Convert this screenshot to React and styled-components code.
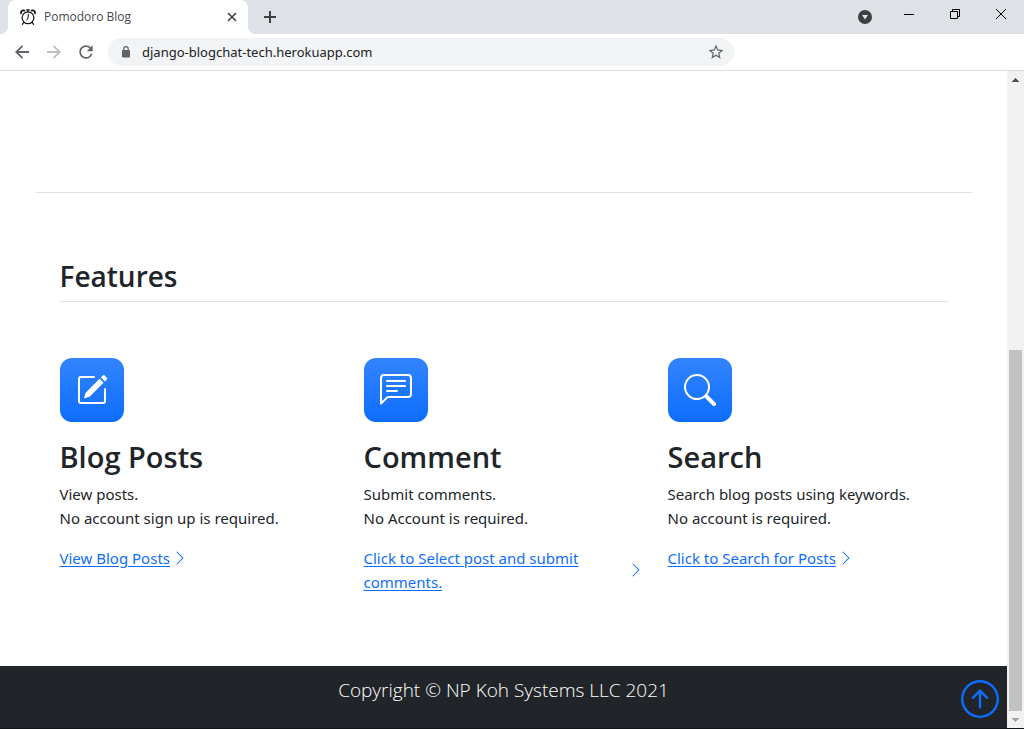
import React from "react";
import styled, { createGlobalStyle } from "styled-components";
import { BsPencilSquare, BsChatLeftText, BsSearch, BsChevronRight, BsArrowUpCircle } from "react-icons/bs";
import { MdRefresh, MdStarBorder } from "react-icons/md";

const GlobalStyle = createGlobalStyle`
  * { box-sizing: border-box; }
  body {
    margin: 0;
    background: #fff;
    color: #212529;
    font-family: "Noto Sans", "Open Sans", sans-serif;
    font-size: 15px;
    line-height: 24px;
  }
  button { padding: 0; border: 0; background: none; color: inherit; font: inherit; cursor: pointer; }
  svg { display: block; flex: none; }
`;

const Window = styled.div`
  display: flex;
  flex-direction: column;
  min-height: 100vh;
  border-bottom: 1px solid #121417;
`;

const TabStrip = styled.header`
  display: flex;
  height: 34px;
  padding-left: 8px;
  background: #dee1e6;
`;

const Tab = styled.div`
  position: relative;
  display: flex;
  align-items: center;
  gap: 8px;
  width: 240px;
  padding: 0 8px 0 12px;
  border-radius: 8px 8px 0 0;
  background: #fff;
  color: #45494d;
  font-family: "Open Sans", "Noto Sans", sans-serif;
  font-size: 12px;

  &::before,
  &::after {
    content: "";
    position: absolute;
    bottom: 0;
    width: 8px;
    height: 8px;
  }
  &::before {
    left: -8px;
    background: radial-gradient(circle at 0 0, #dee1e6 8px, #fff 8px);
  }
  &::after {
    right: -8px;
    background: radial-gradient(circle at 100% 0, #dee1e6 8px, #fff 8px);
  }
`;

const TabTitle = styled.span`
  flex: 1;
  white-space: nowrap;
`;

const IconButton = styled.button`
  display: flex;
  align-items: center;
  justify-content: center;
  width: ${(p) => p.$width || 32}px;
  height: ${(p) => p.$height || 34}px;
  color: ${(p) => p.$color || "#5f6368"};
`;

const WindowControls = styled.div`
  display: flex;
  margin-left: auto;
`;

const Toolbar = styled.nav`
  display: flex;
  align-items: center;
  height: 37px;
  padding-left: 6px;
  border-bottom: 1px solid #dadce0;
  background: #fff;
`;

const AddressBar = styled.label`
  display: flex;
  flex: 1;
  align-items: center;
  gap: 12px;
  height: 28px;
  margin-left: 6px;
  margin-right: 290px;
  padding: 0 2px 0 14px;
  border-radius: 14px;
  background: #f1f3f4;
  color: #5f6368;
`;

const AddressInput = styled.input`
  flex: 1;
  min-width: 0;
  padding: 0;
  border: 0;
  outline: 0;
  background: none;
  color: #202124;
  font: 13px "Noto Sans", "Open Sans", sans-serif;
`;

const Viewport = styled.div`
  display: flex;
  flex: 1;
`;

const Page = styled.div`
  display: flex;
  flex: 1;
  flex-direction: column;
`;

const Main = styled.main`
  flex: 1;
  width: 100%;
  max-width: 936px;
  margin: 0 auto;
  padding-top: 121px;
`;

const Section = styled.section`
  padding: 64px 24px 71px;
  border-top: 1px solid #dee2e6;
`;

const SectionTitle = styled.h2`
  margin: 0 0 56px;
  padding-bottom: 6px;
  border-bottom: 1px solid #dee2e6;
  font-family: "Open Sans", "Noto Sans", sans-serif;
  font-size: 28px;
  font-weight: 600;
  line-height: 38px;
`;

const FeatureGrid = styled.div`
  display: grid;
  grid-template-columns: repeat(3, 1fr);
  gap: 24px;
`;

const FeatureIcon = styled.div`
  display: flex;
  align-items: center;
  justify-content: center;
  width: 64px;
  height: 64px;
  margin-bottom: 16px;
  border-radius: 12px;
  background: linear-gradient(180deg, #3284fd, #0d6efd);
  color: #fff;
`;

const FeatureTitle = styled.h3`
  margin: 0 0 6px;
  font-family: "Open Sans", "Noto Sans", sans-serif;
  font-size: 29px;
  font-weight: 600;
  line-height: 38px;
`;

const FeatureText = styled.p`
  margin: 0 0 16px;
`;

const FeatureLink = styled.a`
  display: inline-flex;
  align-items: center;
  gap: 2px;
  color: #0d6efd;
  text-decoration: underline;
  text-underline-offset: 2px;
`;

const Footer = styled.footer`
  position: relative;
  height: 62px;
  padding-top: 12px;
  background: #212529;
  color: #fff;
  font-family: "Open Sans", "Noto Sans", sans-serif;
  font-size: 19px;
  font-weight: 300;
  text-align: center;
`;

const BackToTop = styled.a`
  position: absolute;
  right: 8px;
  top: 14px;
  color: #0d6efd;
`;

const ScrollTrack = styled.div`
  display: flex;
  flex-direction: column;
  width: 17px;
  background: #f1f1f1;
`;

const ScrollThumb = styled.div`
  flex: 1;
  margin: 262px 2px 0;
  background: #c1c1c1;
`;

function AlarmClock() {
  return (
    <svg width="16" height="16" viewBox="0 0 16 16" fill="none" stroke="#111" strokeLinecap="round">
      <circle cx="8" cy="8.8" r="5.9" strokeWidth="1.2" />
      <path d="M8.3 5.2 8 9l-1.2 2" strokeWidth="1" />
      <path d="M1 4.4C.5 2.5 2.2.9 4.4 1.6M15 4.4c.5-1.9-1.2-3.5-3.4-2.8" strokeWidth="1.7" />
      <path d="M6.7.8h2.6M8 .8v2M3.7 13.5l-1.3 1.8M12.3 13.5l1.3 1.8" strokeWidth="1.2" />
    </svg>
  );
}

function StrokeIcon({ size, path, weight = 2 }) {
  return (
    <svg
      width={size}
      height={size}
      viewBox={`0 0 ${size} ${size}`}
      fill="none"
      stroke="currentColor"
      strokeWidth={weight}
    >
      <path d={path} />
    </svg>
  );
}

function Padlock() {
  return (
    <svg width="8" height="12" viewBox="0 0 8 12" fill="none">
      <rect y="4" width="8" height="7.5" rx="1" fill="#5f6368" />
      <path d="M1.8 5V2.8a2.2 2.2 0 0 1 4.4 0V5" stroke="#5f6368" strokeWidth="1.2" />
    </svg>
  );
}

function ScrollArrow({ down }) {
  return (
    <IconButton type="button" $width={17} $height={17} aria-label={down ? "Scroll down" : "Scroll up"}>
      <svg width="7" height="4" viewBox="0 0 7 4" shapeRendering="crispEdges">
        <path d={down ? "M0 0h7L3.5 4z" : "M0 4h7L3.5 0z"} fill={down ? "#a3a3a3" : "#505050"} />
      </svg>
    </IconButton>
  );
}

const features = [
  {
    icon: BsPencilSquare,
    title: "Blog Posts",
    lines: ["View posts.", "No account sign up is required."],
    link: "View Blog Posts",
  },
  {
    icon: BsChatLeftText,
    title: "Comment",
    lines: ["Submit comments.", "No Account is required."],
    link: "Click to Select post and submit comments.",
  },
  {
    icon: BsSearch,
    title: "Search",
    lines: ["Search blog posts using keywords.", "No account is required."],
    link: "Click to Search for Posts",
  },
];

function Feature({ icon: Icon, title, lines, link }) {
  return (
    <article>
      <FeatureIcon>
        <Icon size={32} />
      </FeatureIcon>
      <FeatureTitle>{title}</FeatureTitle>
      <FeatureText>
        {lines[0]}
        <br />
        {lines[1]}
      </FeatureText>
      <FeatureLink href="#">
        <span>{link}</span>
        <BsChevronRight size={16} />
      </FeatureLink>
    </article>
  );
}

export default function App() {
  return (
    <>
      <GlobalStyle />
      <Window>
        <TabStrip>
          <Tab>
            <AlarmClock />
            <TabTitle>Pomodoro Blog</TabTitle>
            <IconButton type="button" $width={16} $color="#3c4043" aria-label="Close tab">
              <StrokeIcon size={10} path="M1 1l8 8M9 1L1 9" weight={1.6} />
            </IconButton>
          </Tab>
          <IconButton type="button" $width={44} $color="#3c4043" aria-label="New tab">
            <StrokeIcon size={12} path="M6 0v12M0 6h12" />
          </IconButton>
          <WindowControls>
            <IconButton type="button" $width={42} aria-label="Search tabs">
              <svg width="14" height="14" viewBox="0 0 14 14">
                <circle cx="7" cy="7" r="7" fill="#3c4043" />
                <path d="M4 5h6L7 9.5z" fill="#dee1e6" />
              </svg>
            </IconButton>
            <IconButton type="button" $width={46} $height={28} aria-label="Minimize">
              <svg width="10" height="10" viewBox="0 0 10 10" stroke="#000">
                <path d="M0 5.5h10" />
              </svg>
            </IconButton>
            <IconButton type="button" $width={46} $height={28} aria-label="Restore">
              <svg width="10" height="10" viewBox="0 0 10 10" fill="none" stroke="#000">
                <path d="M.5 2.5h7v7h-7zM2.5 2.5v-2h7v7h-2" />
              </svg>
            </IconButton>
            <IconButton type="button" $width={46} $height={28} aria-label="Close window">
              <svg width="10" height="10" viewBox="0 0 10 10" fill="none" stroke="#000">
                <path d="M0 0l10 10M10 0L0 10" />
              </svg>
            </IconButton>
          </WindowControls>
        </TabStrip>
        <Toolbar>
          <IconButton type="button" aria-label="Back">
            <StrokeIcon size={14} path="M14 7H1.5M7.5 .8L1.3 7l6.2 6.2" weight={1.8} />
          </IconButton>
          <IconButton type="button" $color="#bbbdc0" aria-label="Forward">
            <StrokeIcon size={14} path="M0 7h12.5M6.5 .8L12.7 7l-6.2 6.2" weight={1.8} />
          </IconButton>
          <IconButton type="button" aria-label="Reload">
            <MdRefresh size={20} />
          </IconButton>
          <AddressBar>
            <Padlock />
            <AddressInput type="text" aria-label="Address" defaultValue="django-blogchat-tech.herokuapp.com" />
            <IconButton type="button" $height={28} aria-label="Bookmark this page">
              <MdStarBorder size={18} />
            </IconButton>
          </AddressBar>
        </Toolbar>
        <Viewport>
          <Page>
            <Main>
              <Section>
                <SectionTitle>Features</SectionTitle>
                <FeatureGrid>
                  {features.map((f) => (
                    <Feature key={f.title} {...f} />
                  ))}
                </FeatureGrid>
              </Section>
            </Main>
            <Footer>
              Copyright © NP Koh Systems LLC 2021
              <BackToTop href="#" aria-label="Back to top">
                <BsArrowUpCircle size={38} />
              </BackToTop>
            </Footer>
          </Page>
          <ScrollTrack>
            <ScrollArrow />
            <ScrollThumb />
            <ScrollArrow down />
          </ScrollTrack>
        </Viewport>
      </Window>
    </>
  );
}
